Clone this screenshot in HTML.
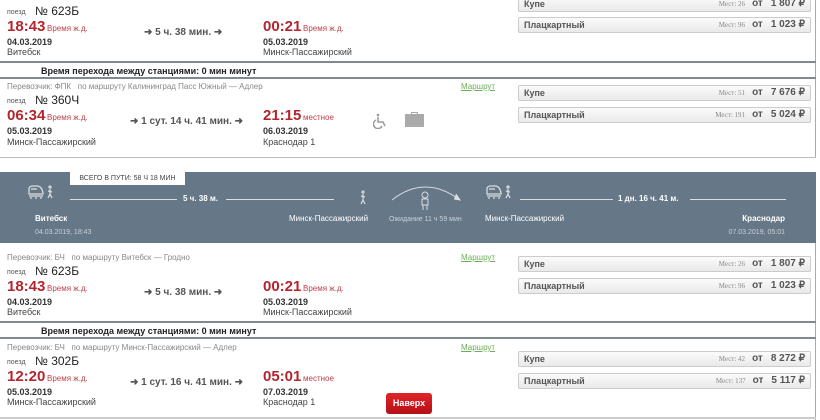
<!DOCTYPE html>
<html><head><meta charset="utf-8"><style>
*{margin:0;padding:0;box-sizing:border-box}
body{width:820px;height:420px;overflow:hidden;background:#fff;font-family:"Liberation Sans",Arial,sans-serif;position:relative;color:#222;line-height:1}
.a{position:absolute;white-space:nowrap;line-height:1}
.sm{font-size:7px;color:#555}
.num{font-size:12px;color:#222}
.t{font-size:15px;font-weight:bold;color:#b3262d}
.tl{font-size:8px;color:#c04048}
.d{font-size:9px;font-weight:bold;color:#333}
.c{font-size:9px;color:#444}
.dur{font-size:10px;color:#555;font-weight:bold}
.car{font-size:8px;color:#888}
.rt{font-size:8px;color:#6cae5a;text-decoration:underline}
.hl{position:absolute;left:0;width:816px;height:2px;background:#7f8a90}
.lg{position:absolute;left:0;width:816px;height:1px;background:#bbb}
.tr{font-size:9px;font-weight:bold;color:#222}
.box{position:absolute;left:518px;width:293px;height:16px;border:1px solid #ccc;border-radius:2px;background:linear-gradient(#fbfbfb,#e9e9e9);font-size:9px}
.box .n{position:absolute;left:5px;top:3px;font-weight:bold;color:#555}
.box .p{position:absolute;right:5px;top:2px;font-weight:bold;color:#555;font-size:10px}
.box .p i{font-style:normal;font-weight:normal;font-size:7px;color:#888;font-family:"Liberation Serif",serif;margin-right:7px}
.box .p s{text-decoration:none;margin-right:8px}
.pn{position:absolute;left:0;top:172px;width:816px;height:71px;background:#667788}
.w{color:#fff;font-size:8px;font-weight:bold}
.g{color:#c8d0d8;font-size:7px}
.ln{position:absolute;height:1px;background:#d8dde2}
</style></head><body>
<div class="a" style="left:815px;top:0;width:1px;height:158px;background:#aaa"></div>
<div class="a" style="left:815px;top:243px;width:1px;height:177px;background:#aaa"></div>

<div class="a sm" style="left:7px;top:9px">поезд</div>
<div class="a num" style="left:35px;top:5px">№ 623Б</div>
<div class="a t" style="left:7px;top:19px">18:43</div>
<div class="a tl" style="left:47px;top:25px">Время ж.д.</div>
<div class="a dur" style="left:144px;top:28px">➜ 5 ч. 38 мин. ➜</div>
<div class="a t" style="left:263px;top:19px">00:21</div>
<div class="a tl" style="left:303px;top:25px">Время ж.д.</div>
<div class="a d" style="left:7px;top:38px">04.03.2019</div>
<div class="a d" style="left:263px;top:38px">05.03.2019</div>
<div class="a c" style="left:7px;top:48px">Витебск</div>
<div class="a c" style="left:263px;top:48px">Минск-Пассажирский</div>
<div class="box" style="top:-4px"><span class="n">Купе</span><span class="p"><i>Мест: 26</i><s>от</s>1 807 ₽</span></div>
<div class="box" style="top:17px"><span class="n">Плацкартный</span><span class="p"><i>Мест: 96</i><s>от</s>1 023 ₽</span></div>
<div class="hl" style="top:61px"></div>
<div class="a tr" style="left:41px;top:67px">Время перехода между станциями: 0 мин минут</div>
<div class="hl" style="top:77px"></div>

<div class="a car" style="left:7px;top:83px">Перевозчик: ФПК &nbsp; по маршруту Калининград Пасс Южный — Адлер</div>
<div class="a rt" style="left:461px;top:83px">Маршрут</div>
<div class="a sm" style="left:7px;top:98px">поезд</div>
<div class="a num" style="left:35px;top:94px">№ 360Ч</div>
<div class="a t" style="left:7px;top:108px">06:34</div>
<div class="a tl" style="left:47px;top:114px">Время ж.д.</div>
<div class="a dur" style="left:130px;top:117px">➜ 1 сут. 14 ч. 41 мин. ➜</div>
<div class="a t" style="left:263px;top:108px">21:15</div>
<div class="a tl" style="left:303px;top:114px">местное</div>
<svg class="a" style="left:373px;top:113px" width="14" height="16" viewBox="0 0 14 16" fill="none" stroke="#999" stroke-width="1.5"><circle cx="5" cy="2" r="1.3" fill="#999" stroke="none"/><path d="M5 4v5h5l2 4"/><path d="M3 7a4.5 4.5 0 1 0 6 6"/></svg>
<div class="a" style="left:405px;top:114px;width:19px;height:13px;background:#aaa"></div>
<div class="a" style="left:411px;top:112px;width:7px;height:4px;border:1px solid #aaa;border-bottom:none"></div>
<div class="a d" style="left:7px;top:127px">05.03.2019</div>
<div class="a d" style="left:263px;top:127px">06.03.2019</div>
<div class="a c" style="left:7px;top:138px">Минск-Пассажирский</div>
<div class="a c" style="left:263px;top:138px">Краснодар 1</div>
<div class="box" style="top:85px"><span class="n">Купе</span><span class="p"><i>Мест: 51</i><s>от</s>7 676 ₽</span></div>
<div class="box" style="top:107px"><span class="n">Плацкартный</span><span class="p"><i>Мест: 191</i><s>от</s>5 024 ₽</span></div>
<div class="lg" style="top:157px"></div>

<div class="pn">
 <div class="a" style="left:70px;top:0;width:115px;height:13px;background:#fff;font-size:7px;color:#444;text-align:center;line-height:13px">ВСЕГО В ПУТИ: 58 Ч 18 МИН</div>
 <svg class="a" style="left:27px;top:12px" width="32" height="16" viewBox="0 0 32 16" fill="none" stroke="#d8dde2" stroke-width="1.3"><path d="M2 10 L2 5 Q2 2 6 2 L11 2 Q15 3 16 9 L16 10 Z"/><path d="M4 5h6"/><path d="M2 12h14M3 14h2M8 14h2M13 14h2"/><circle cx="23" cy="3" r="1"/><path d="M23 5v5l-2 4M23 10l2 4M21 7l4 1"/></svg>
 <div class="ln" style="left:70px;top:27px;width:107px"></div>
 <div class="a w" style="left:183px;top:23px">5 ч. 38 м.</div>
 <div class="ln" style="left:226px;top:27px;width:108px"></div>
 <svg class="a" style="left:357px;top:17px" width="12" height="16" viewBox="0 0 12 16" fill="none" stroke="#d8dde2" stroke-width="1.2"><circle cx="6" cy="3" r="1"/><path d="M6 5v6l-2 4M6 11l2 4M4 7l4 1"/></svg>
 <svg class="a" style="left:390px;top:10px" width="75" height="30" viewBox="0 0 75 30" fill="none" stroke="#d8dde2" stroke-width="1"><path d="M2 18 Q35 -8 70 18"/><path d="M66 12 L70 18 L64 17" fill="#d8dde2"/><circle cx="35" cy="13" r="3"/><path d="M32 17h6v6h-6zM33 23v5M37 23v5"/></svg>
 <div class="a w" style="left:35px;top:43px">Витебск</div>
 <div class="a g" style="left:35px;top:57px">04.03.2019, 18:43</div>
 <div class="a w" style="left:289px;top:43px;font-weight:normal">Минск-Пассажирский</div>
 <div class="a g" style="left:389px;top:44px">Ожидание 11 ч 59 мин</div>
 <svg class="a" style="left:485px;top:12px" width="32" height="16" viewBox="0 0 32 16" fill="none" stroke="#d8dde2" stroke-width="1.3"><path d="M2 10 L2 5 Q2 2 6 2 L11 2 Q15 3 16 9 L16 10 Z"/><path d="M4 5h6"/><path d="M2 12h14M3 14h2M8 14h2M13 14h2"/><circle cx="23" cy="3" r="1"/><path d="M23 5v5l-2 4M23 10l2 4M21 7l4 1"/></svg>
 <div class="ln" style="left:520px;top:27px;width:93px"></div>
 <div class="a w" style="left:618px;top:23px">1 дн. 16 ч. 41 м.</div>
 <div class="ln" style="left:690px;top:27px;width:96px"></div>
 <div class="a w" style="left:485px;top:43px;font-weight:normal">Минск-Пассажирский</div>
 <div class="a w" style="right:31px;top:43px">Краснодар</div>
 <div class="a g" style="right:31px;top:57px">07.03.2019, 05:01</div>
</div>

<div class="a car" style="left:7px;top:254px">Перевозчик: БЧ &nbsp; по маршруту Витебск — Гродно</div>
<div class="a rt" style="left:461px;top:254px">Маршрут</div>
<div class="a sm" style="left:7px;top:269px">поезд</div>
<div class="a num" style="left:35px;top:265px">№ 623Б</div>
<div class="a t" style="left:7px;top:279px">18:43</div>
<div class="a tl" style="left:47px;top:285px">Время ж.д.</div>
<div class="a dur" style="left:144px;top:288px">➜ 5 ч. 38 мин. ➜</div>
<div class="a t" style="left:263px;top:279px">00:21</div>
<div class="a tl" style="left:303px;top:285px">Время ж.д.</div>
<div class="a d" style="left:7px;top:298px">04.03.2019</div>
<div class="a d" style="left:263px;top:298px">05.03.2019</div>
<div class="a c" style="left:7px;top:308px">Витебск</div>
<div class="a c" style="left:263px;top:308px">Минск-Пассажирский</div>
<div class="box" style="top:256px"><span class="n">Купе</span><span class="p"><i>Мест: 26</i><s>от</s>1 807 ₽</span></div>
<div class="box" style="top:278px"><span class="n">Плацкартный</span><span class="p"><i>Мест: 96</i><s>от</s>1 023 ₽</span></div>
<div class="hl" style="top:321px"></div>
<div class="a tr" style="left:41px;top:327px">Время перехода между станциями: 0 мин минут</div>
<div class="hl" style="top:337px"></div>

<div class="a car" style="left:7px;top:344px">Перевозчик: БЧ &nbsp; по маршруту Минск-Пассажирский — Адлер</div>
<div class="a rt" style="left:461px;top:344px">Маршрут</div>
<div class="a sm" style="left:7px;top:359px">поезд</div>
<div class="a num" style="left:35px;top:355px">№ 302Б</div>
<div class="a t" style="left:7px;top:369px">12:20</div>
<div class="a tl" style="left:47px;top:375px">Время ж.д.</div>
<div class="a dur" style="left:130px;top:378px">➜ 1 сут. 16 ч. 41 мин. ➜</div>
<div class="a t" style="left:263px;top:369px">05:01</div>
<div class="a tl" style="left:303px;top:375px">местное</div>
<div class="a d" style="left:7px;top:388px">05.03.2019</div>
<div class="a d" style="left:263px;top:388px">07.03.2019</div>
<div class="a c" style="left:7px;top:398px">Минск-Пассажирский</div>
<div class="a c" style="left:263px;top:398px">Краснодар 1</div>
<div class="a" style="left:386px;top:393px;width:46px;height:21px;border-radius:3px;background:linear-gradient(#e0252a,#b50f14);color:#fff;font-size:9px;font-weight:bold;text-align:center;line-height:21px">Наверх</div>
<div class="box" style="top:351px"><span class="n">Купе</span><span class="p"><i>Мест: 42</i><s>от</s>8 272 ₽</span></div>
<div class="box" style="top:373px"><span class="n">Плацкартный</span><span class="p"><i>Мест: 137</i><s>от</s>5 117 ₽</span></div>
<div class="lg" style="top:417px;height:2px;background:#ccc"></div>
</body></html>
